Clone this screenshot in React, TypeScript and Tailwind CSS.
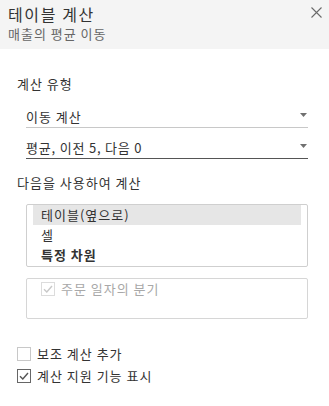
import React from "react";

const font = { fontFamily: '"Noto Sans CJK KR", "Noto Sans", sans-serif' };

function Arrow() {
  return (
    <svg width="7" height="4" viewBox="0 0 7 4" className="block">
      <path d="M0 0 H7 L3.5 4 Z" fill="#707070" />
    </svg>
  );
}

function Check({ color }: { color: string }) {
  return (
    <svg width="10" height="8" viewBox="0 0 10 8" className="block">
      <path d="M1 4.2 L3.8 7 L9 1" fill="none" stroke={color} strokeWidth="1.4" />
    </svg>
  );
}

export default function App() {
  return (
    <div
      className="w-[329px] h-[406px] bg-white text-[#333] text-[13px] tracking-[1px] overflow-hidden"
      style={font}
    >
      <div className="bg-[#f4f4f4] h-[49px] pl-[8px] pr-[7px] pt-[4px] flex justify-between">
        <div>
          <div className="text-[16px] leading-[20px] tracking-[1.6px] text-[#333]">테이블 계산</div>
          <div className="text-[13px] leading-[18px] mt-[1px] text-[#666]">매출의 평균 이동</div>
        </div>
        <svg width="11" height="11" viewBox="0 0 11 11" className="mt-[3px]">
          <path d="M0.5 0.5 L10.5 10.5 M10.5 0.5 L0.5 10.5" stroke="#6a6a6a" strokeWidth="1.1" />
        </svg>
      </div>

      <div className="pl-[17px] pr-[21px] pt-[26px]">
        <div className="leading-[18px]">계산 유형</div>

        <div className="ml-[9px] mt-[11px] h-[24px] pt-[4px] border-b border-[#c8c8c8] flex justify-between">
          <span className="leading-[18px]">이동 계산</span>
          <div className="pt-[5px] pr-[1px]"><Arrow /></div>
        </div>
        <div className="ml-[9px] mt-[7px] h-[24px] pt-[4px] border-b border-[#555] flex justify-between">
          <span className="leading-[18px] tracking-[0.8px]">평균, 이전 5, 다음 0</span>
          <div className="pt-[5px] pr-[1px]"><Arrow /></div>
        </div>

        <div className="mt-[15px] leading-[18px]">다음을 사용하여 계산</div>

        <div className="ml-[9px] mt-[12px] h-[63px] border border-[#cfcfcf] rounded-[2px] px-[6px]">
          <div className="h-[20px] bg-[#e6e6e6] pl-[8px] leading-[20px]">테이블(옆으로)</div>
          <div className="h-[20px] pl-[8px] leading-[20px]">셀</div>
          <div className="h-[20px] pl-[8px] leading-[20px] font-bold">특정 차원</div>
        </div>

        <div className="ml-[9px] mt-[11px] h-[41px] border border-[#d6d6d6] rounded-[2px] pl-[14px] pt-[3px]">
          <div className="flex items-center h-[14px]">
            <div className="w-[14px] h-[14px] border border-[#dcdcdc] flex items-center justify-center">
              <Check color="#c8c8c8" />
            </div>
            <span className="ml-[6px] leading-[18px] text-[#a8a8a8]">주문 일자의 분기</span>
          </div>
        </div>

        <div className="mt-[28px] flex items-center h-[14px]">
          <div className="w-[14px] h-[14px] border border-[#c8c8c8]" />
          <span className="ml-[6px] leading-[18px]">보조 계산 추가</span>
        </div>
        <div className="mt-[8px] flex items-center h-[14px]">
          <div className="w-[14px] h-[14px] border border-[#666] flex items-center justify-center">
            <Check color="#555" />
          </div>
          <span className="ml-[6px] leading-[18px]">계산 지원 기능 표시</span>
        </div>
      </div>
    </div>
  );
}
